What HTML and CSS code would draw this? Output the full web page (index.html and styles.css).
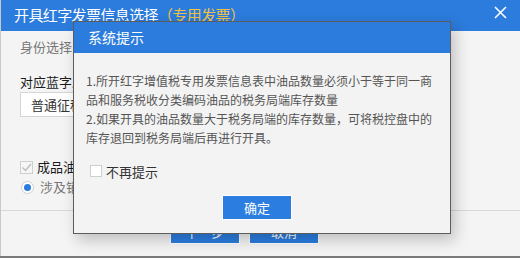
FILE: index.html
```html
<!DOCTYPE html>
<html lang="zh-CN">
<head>
<meta charset="utf-8">
<link rel="stylesheet" href="styles.css">
</head>
<body>
<div class="win">
  <div class="win-title">
    <span class="win-title-text">开具红字发票信息选择<span class="accent">（专用发票）</span></span>
    <svg class="close" width="13" height="13" viewBox="0 0 13 13"><path d="M1 1 L12 12 M12 1 L1 12" stroke="#fff" stroke-width="1.6" fill="none"/></svg>
  </div>
  <div class="win-body">
    <div class="row muted">身份选择</div>
    <div class="row label">对应蓝字发</div>
    <div class="select">普通征税</div>
    <div class="row check-row">
      <span class="cb checked"><svg width="13" height="13" viewBox="0 0 13 13"><path d="M2.5 6.5 L5.5 9.5 L11 3" stroke="#bdbdbd" stroke-width="1.4" fill="none"/></svg></span>
      <span class="label">成品油发</span>
    </div>
    <div class="row check-row">
      <span class="radio"><span class="dot"></span></span>
      <span class="muted">涉及销售</span>
    </div>
  </div>
  <div class="win-foot">
    <button class="btn">下一步</button>
    <button class="btn">取消</button>
  </div>

  <div class="modal">
    <div class="modal-title">系统提示</div>
    <div class="modal-body">
      <p class="msg">1.所开红字增值税专用发票信息表中油品数量必须小于等于同一商<br>品和服务税收分类编码油品的税务局端库存数量<br>2.如果开具的油品数量大于税务局端的库存数量，可将税控盘中的<br>库存退回到税务局端后再进行开具。</p>
      <div class="no-more"><span class="cb"></span><span>不再提示</span></div>
      <div class="modal-foot"><button class="btn ok">确定</button></div>
    </div>
  </div>
</div>
</body>
</html>
```
FILE: styles.css
```css
* { box-sizing: border-box; }
html, body { margin: 0; padding: 0; }
body {
  width: 520px; height: 258px; overflow: hidden;
  font-family: "Microsoft YaHei", "Noto Sans CJK SC", sans-serif;
  background: #7a7a7a;
}
.win {
  position: relative;
  width: 520px; height: 256px;
  background: #f4f4f4;
  border-left: 1px solid #c8c8c8;
  display: flex; flex-direction: column;
}
.win-title {
  height: 31px; background: #2b7cdc;
  display: flex; align-items: center; justify-content: space-between;
  padding: 0 13px 2px 13px;
  color: #fff; font-size: 15px;
}
.win-title-text { letter-spacing: -0.6px; }
.accent { color: #f0c24a; }
.close { margin-top: -4px; }
.win-body {
  flex: 1;
  padding: 6px 19px 0 19px;
  display: flex; flex-direction: column;
  font-size: 13px;
}
.row { height: 20px; line-height: 20px; white-space: nowrap; }
.muted { color: #777; }
.label { color: #1a1a1a; }
.row.label { margin-top: 15px; }
.select {
  height: 25px; line-height: 23px;
  width: 200px; background: #fff; border: 1px solid #d5d5d5;
  padding-left: 10px; color: #333;
}
.check-row { display: flex; align-items: center; gap: 4px; }
.check-row:nth-of-type(4) { margin-top: 40px; }
.cb {
  width: 13px; height: 13px; border: 1px solid #cfcfcf; background: #fff;
  display: inline-flex; align-items: center; justify-content: center;
}
.cb.checked { background: #f6f6f6; }
.cb svg { display: block; margin: -1px; }
.radio {
  width: 13px; height: 13px; border-radius: 50%; border: 1px solid #cfcfcf; background: #fff;
  display: inline-flex; align-items: center; justify-content: center; margin: 0 2px 0 1px;
}
.dot { width: 7px; height: 7px; border-radius: 50%; background: #2b7cdc; }
.win-foot {
  height: 46px; border-top: 1px solid #d8d8d8;
  display: flex; justify-content: center; gap: 9px;
  padding-top: 8px; padding-right: 32px;
}
.btn {
  font-family: inherit; font-size: 13px; color: #fff;
  background: #2b7ee0; border: 1px solid #fff;
  width: 70px; height: 25px; padding: 0; margin: 0;
}
.modal {
  position: absolute; left: 72px; top: 21px;
  width: 378px; height: 213px;
  border: 1px solid #5c5c5c;
  background: #f3f3f3;
  box-shadow: 4px 6px 14px rgba(0,0,0,0.22);
  display: flex; flex-direction: column;
}
.modal-title {
  height: 31px; background: #2b7cdc; color: #fff;
  font-size: 14px; line-height: 31px; padding-left: 14px;
}
.modal-body { padding: 18px 12px 0 12px; display: flex; flex-direction: column; }
.msg {
  margin: 0; font-size: 12px; line-height: 19px; color: #555;
  white-space: nowrap;
}
.no-more {
  margin-top: 14px; padding-left: 4px;
  display: flex; align-items: center; gap: 4px;
  font-size: 13px; color: #333; height: 20px;
}
.no-more .cb { width: 12px; height: 12px; }
.modal-foot {
  margin-top: 14px; display: flex; justify-content: center; padding-right: 10px;
}
.btn.ok { width: 70px; height: 25px; }
```
